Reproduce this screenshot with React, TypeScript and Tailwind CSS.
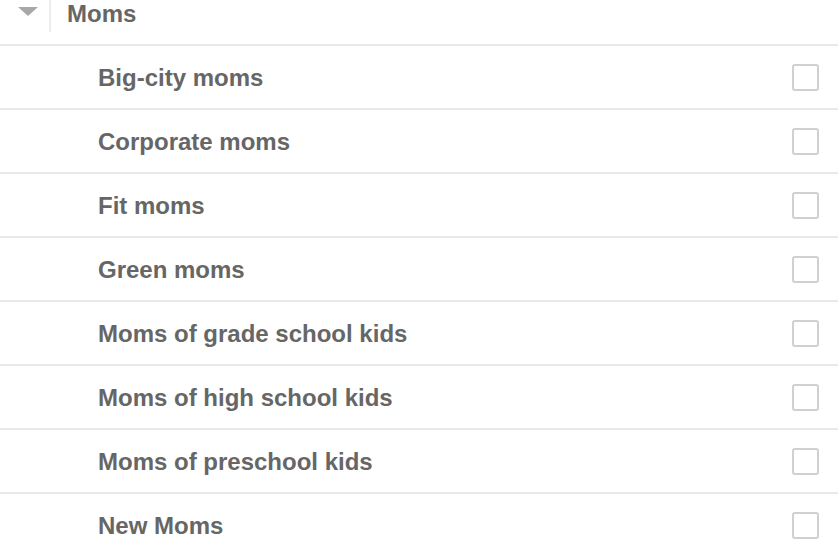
const items = [
  'Big-city moms',
  'Corporate moms',
  'Fit moms',
  'Green moms',
  'Moms of grade school kids',
  'Moms of high school kids',
  'Moms of preschool kids',
  'New Moms',
];

export default function App() {
  return (
    <div className="w-[838px] h-[544px] overflow-hidden bg-white font-['Liberation_Sans',Arial,sans-serif] text-[#666]">
      <div className="h-[46px] border-b-2 border-[#e8e8e8] flex items-start">
        <div className="w-[51px] h-[32px] border-r-2 border-[#ececec] flex items-start justify-center pt-[7px] pl-[6px]">
          <svg width="20" height="9" viewBox="0 0 20 9">
            <path d="M0 0h20L10 9z" fill="#a8a8a8" />
          </svg>
        </div>
        <span className="pl-[16px] text-[24px] font-bold leading-[28px]">Moms</span>
      </div>
      {items.map((label) => (
        <div key={label} className="h-[64px] border-b-2 border-[#e8e8e8] flex items-center justify-between pl-[98px] pr-[19px]">
          <span className="text-[24px] font-bold leading-none pt-[2px]">{label}</span>
          <span className="w-[27px] h-[27px] rounded-[3px] border-2 border-[#d0d0d0] bg-white" />
        </div>
      ))}
    </div>
  );
}
